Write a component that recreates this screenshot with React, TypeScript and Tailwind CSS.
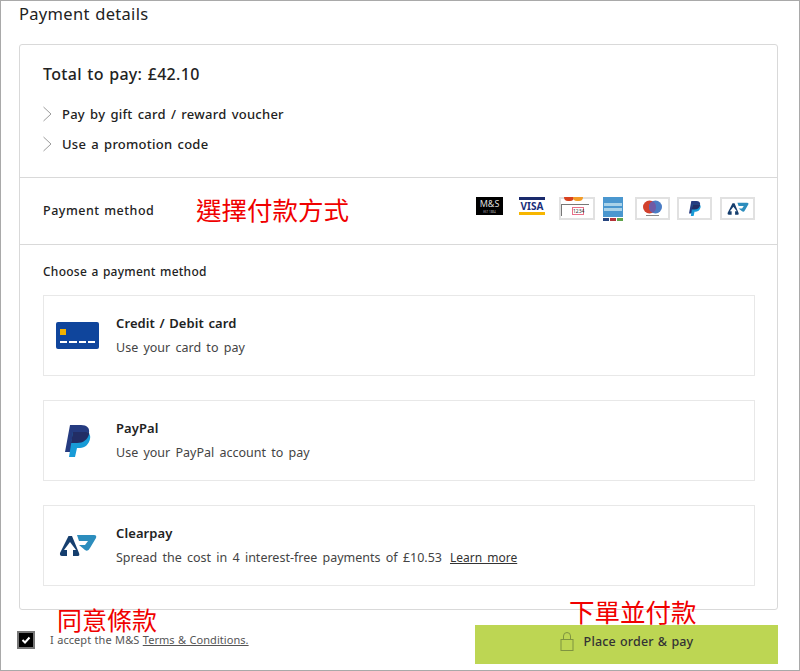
const font = { fontFamily: '"Noto Sans", "Noto Sans CJK TC", sans-serif' };

const Chevron = () => (
  <svg width="10" height="16" viewBox="0 0 10 16" fill="none" className="shrink-0">
    <path d="M0.5 1 L8 8 L0.5 15" stroke="#9a9a9a" strokeWidth="1" />
  </svg>
);

const PayPalIcon = ({ className }: { className: string }) => (
  <svg viewBox="0 0 26 32" className={className}>
    <path d="M5 0H16C22 0 25 3 24 8C23 15 18 18 12 18H9L7 27H0Z" fill="#253b80" />
    <path d="M8 7H20C24 7 26 10 25 14C24 19 20 23 15 23H12L10 32H4Z" fill="#179bd7" />
    <path d="M8 7H20C22 7 23.300 7.400 24.300 8.300C23 15 18 18 12 18H6Z" fill="#222d65" />
  </svg>
);

const ClearpayIcon = ({ className }: { className: string }) => (
  <svg viewBox="0 0 38 24" className={className}>
    <path d="M9.500 2L1 19Q0.500 22 3 22H8V16H5L11 8L17 16H14V22H19Q21 22 20 19L13 2Z" fill="#153e6e" />
    <path d="M18 1H35Q38 1 37 4L31 14Q29 18 26 16L20 11H26L29 7H20Z" fill="#2c8dbd" />
  </svg>
);

const MethodRow = ({ icon, title, text, link, className }: { icon: React.ReactNode; title: string; text: string; link?: string; className: string }) => (
  <div className={`flex items-center border border-[#e8e8e8] h-[81px] ${className}`}>
    <div className="w-[67px] mr-[5px] shrink-0 flex justify-center">{icon}</div>
    <div>
      <p className="text-[13px] leading-[18px] font-semibold text-[#222] tracking-[0.1px] [word-spacing:1px]">{title}</p>
      <p className="mt-[7px] text-[12.5px] leading-[18px] text-[#444] [word-spacing:2px]">
        {text}
        {link && <span className="ml-[8px] underline text-[#333] text-[12px]">{link}</span>}
      </p>
    </div>
  </div>
);

const Frame = ({ children, className }: { children: React.ReactNode; className: string }) => (
  <div className={`border-2 border-[#e1e1e1] flex items-center justify-center overflow-hidden ${className}`}>{children}</div>
);

export default function App() {
  return (
    <div style={font} className="relative w-[800px] h-[671px] bg-white border border-[#a9a9a9] overflow-hidden">
      <h2 className="pl-[18px] pt-[2px] text-[16.5px] leading-[22px] text-[#222] tracking-[0.3px] [word-spacing:1px]">Payment details</h2>

      <div className="mx-[18px] mt-[19px] w-[759px] h-[566px] border border-[#d9d9d9] rounded-[3px]">
        <div className="h-[133px] pl-[23px] pt-[18px] border-b border-[#d9d9d9]">
          <p className="text-[16px] leading-[22px] font-medium text-[#222] tracking-[0.3px] [word-spacing:1px]">Total to pay: £42.10</p>
          <div className="mt-[20px] flex items-center gap-[9px]">
            <Chevron />
            <span className="text-[13px] leading-[18px] font-medium text-[#222] tracking-[0.25px] [word-spacing:1.5px]">Pay by gift card / reward voucher</span>
          </div>
          <div className="mt-[12px] flex items-center gap-[9px]">
            <Chevron />
            <span className="text-[13px] leading-[18px] font-medium text-[#222] tracking-[0.25px] [word-spacing:1.5px]">Use a promotion code</span>
          </div>
        </div>

        <div className="h-[67px] pl-[23px] pr-[22px] flex items-center border-b border-[#d9d9d9]">
          <span className="w-[153px] text-[12.5px] leading-[18px] font-medium text-[#222] tracking-[0.5px] [word-spacing:1px]">Payment method</span>
          <span className="text-[25.5px] leading-[30px] mb-[2px] text-[#f00000]">選擇付款方式</span>

          <div className="ml-auto flex items-start h-[24px] -mt-[4px]">
            <div className="w-[27px] h-[18px] bg-black text-[#ddd] flex flex-col items-center justify-center">
              <span className="text-[9px] leading-[12px]">M&amp;S</span>
              <span className="text-[3px] leading-[4px] text-[#aaa]">EST 1884</span>
            </div>
            <div className="ml-[16px] w-[26px] h-[18px] flex flex-col justify-between">
              <div className="h-[3px] bg-[#1a2a6c]" />
              <span className="text-[10px] leading-[10px] font-bold text-center text-[#1a2f7a]">VISA</span>
              <div className="h-[3px] bg-[#f7b600]" />
            </div>
            <div className="relative ml-[14px] w-[36px] h-[23px] border-2 border-[#e1e1e1]">
              <div className="absolute -top-[2px] left-[3px] w-[10px] h-[4px] rounded-b-full bg-[#d9411e]" />
              <div className="absolute -top-[2px] left-[12px] w-[10px] h-[4px] rounded-b-full bg-[#f39c26]" />
              <div className="absolute left-0 top-[5px] w-[28px] h-[12px] border-t border-l border-[#777]" />
              <div className="absolute right-[9px] top-[8px] w-[12px] h-[8px] border border-[#e8708a] text-[5px] leading-[6px] text-center text-[#333]">1234</div>
            </div>
            <div className="ml-[8px] w-[20px] h-[24px] flex flex-col gap-[1px]">
              <div className="h-[20px] bg-[#4a97cf] flex flex-col justify-center gap-[2px] px-[1px]">
                <div className="h-[3px] bg-[#a9d2e8]" />
                <div className="h-[3px] bg-[#a9d2e8]" />
              </div>
              <div className="flex gap-[1px]">
                <div className="h-[3px] flex-1 bg-[#27457f]" />
                <div className="h-[3px] flex-1 bg-[#b5343a]" />
                <div className="h-[3px] flex-1 bg-[#5fa34a]" />
              </div>
            </div>
            <Frame className="ml-[12px] w-[35px] h-[23px]">
              <svg viewBox="0 0 31 19" className="w-[31px] h-[19px]">
                <circle cx="12.500" cy="8" r="6.500" fill="#d2402c" />
                <circle cx="18.500" cy="8" r="6.500" fill="#4a7cc4" />
                <path d="M15.500 2.240a6.500 6.500 0 0 1 0 11.520a6.500 6.500 0 0 1 0-11.520z" fill="#6f5aa5" />
                <rect x="9" y="16" width="13" height="1" fill="#888" />
              </svg>
            </Frame>
            <Frame className="ml-[7px] w-[35px] h-[23px]">
              <PayPalIcon className="h-[15px] w-[12px]" />
            </Frame>
            <Frame className="ml-[8px] w-[35px] h-[23px]">
              <ClearpayIcon className="w-[22px] h-[14px]" />
            </Frame>
          </div>
        </div>

        <div className="pl-[23px] pr-[22px]">
          <p className="pt-[18px] text-[12px] leading-[18px] font-medium text-[#222] tracking-[0.25px] [word-spacing:1px]">Choose a payment method</p>
          <MethodRow
            className="mt-[14px]"
            title="Credit / Debit card"
            text="Use your card to pay"
            icon={
              <div className="relative w-[43px] h-[27px] rounded-[2px] bg-[#0f459c]">
                <div className="absolute left-[4px] top-[7px] w-[6px] h-[6px] bg-[#f2b100]" />
                <div className="absolute left-[4px] right-[4px] bottom-[6px] flex gap-[2px]">
                  <div className="h-[2px] flex-1 bg-white" />
                  <div className="h-[2px] flex-1 bg-white" />
                  <div className="h-[2px] flex-1 bg-white" />
                  <div className="h-[2px] flex-1 bg-white" />
                </div>
              </div>
            }
          />
          <MethodRow
            className="mt-[24px]"
            title="PayPal"
            text="Use your PayPal account to pay"
            icon={<PayPalIcon className="w-[26px] h-[32px]" />}
          />
          <MethodRow
            className="mt-[24px]"
            title="Clearpay"
            text="Spread the cost in 4 interest-free payments of £10.53"
            link="Learn more"
            icon={<ClearpayIcon className="w-[38px] h-[24px]" />}
          />
        </div>
      </div>

      <div className="flex items-center justify-between pl-[16px] pr-[21px]">
        <div className="flex items-center mt-[6px]">
          <div className="w-[18px] h-[18px] bg-black border-2 border-[#777] flex items-center justify-center">
            <svg width="10" height="8" viewBox="0 0 10 8" fill="none">
              <path d="M1.500 4 L4 6.500 L8.500 1.500" stroke="#fff" strokeWidth="2" />
            </svg>
          </div>
          <p className="ml-[15px] text-[11px] leading-[16px] text-[#555] tracking-[0.05px] [word-spacing:0.5px]">
            I accept the M&amp;S <span className="underline">Terms &amp; Conditions.</span>
          </p>
        </div>
        <button className="w-[303px] h-[39px] mt-[15px] pb-[5px] bg-[#bdd653] flex items-center justify-center gap-[10px]">
          <svg width="14" height="20" viewBox="0 0 14 20" fill="none" stroke="#7f9440" strokeWidth="1">
            <rect x="1" y="7.500" width="12" height="11" />
            <path d="M3.500 7.500V4a3.500 3.500 0 0 1 7 0v3.500" />
          </svg>
          <span className="text-[12.500px] leading-[18px] font-medium text-[#333] tracking-[0.15px] [word-spacing:0.8px]">Place order &amp; pay</span>
        </button>
      </div>

      <span className="absolute left-[56px] top-[605px] text-[25px] leading-[28px] text-[#f00000]">同意條款</span>
      <span className="absolute left-[568px] top-[597px] text-[25.500px] leading-[28px] text-[#f00000]">下單並付款</span>
    </div>
  );
}
